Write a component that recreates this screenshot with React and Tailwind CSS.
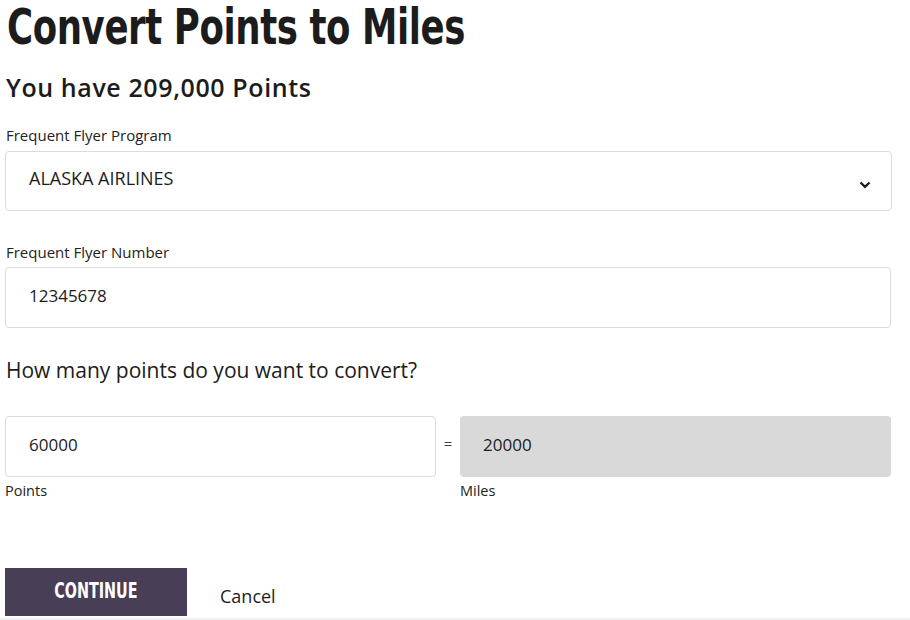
import React from "react";

const body = { fontFamily: "'Open Sans', 'Liberation Sans', sans-serif" };
const cond = { fontFamily: "'DejaVu Sans Condensed', 'DejaVu Sans', sans-serif" };

export default function App() {
  return (
    <div className="w-[910px] h-[620px] bg-white overflow-hidden flex flex-col text-[#222]" style={body}>
      <div className="flex-1 flex flex-col pl-[5px] pr-[18px]">
        <h1 className="h-[56px] -mt-[1px] ml-[2px] whitespace-nowrap">
          <span
            className="inline-block origin-left scale-x-[0.79] text-[50px] leading-[56px] font-bold tracking-[-0.5px] text-[#1c1c1c]"
            style={cond}
          >
            Convert Points to Miles
          </span>
        </h1>
        <h2 className="text-[25px] leading-[30px] font-semibold tracking-[0.6px] mt-[17px] ml-[1px] text-[#1c1c1c]">You have 209,000 Points</h2>

        <label className="text-[15px] leading-[18px] mt-[24px] ml-[1px] text-[#222]">Frequent Flyer Program</label>
        <div className="mt-[7px] h-[60px] border border-[#dcdcdc] rounded-[4px] flex items-center justify-between pl-[23px] pr-[20px] pb-[5px]">
          <span className="text-[18px] text-[#1c1c1c]">ALASKA AIRLINES</span>
          <svg width="12" height="8" viewBox="0 0 12 8" className="mt-[12px]">
            <path d="M1.5 1.5 L6 5.8 L10.5 1.5" fill="none" stroke="#1c1c1c" strokeWidth="2.4" />
          </svg>
        </div>

        <label className="text-[15px] leading-[18px] mt-[32px] ml-[1px] text-[#222]">Frequent Flyer Number</label>
        <div className="mt-[6px] h-[61px] border border-[#dcdcdc] rounded-[4px] flex items-center pl-[23px] pb-[4px] mr-[1px]">
          <span className="text-[17px] text-[#1c1c1c]">12345678</span>
        </div>

        <p className="text-[21px] leading-[26px] mt-[29px] ml-[1px] text-[#1c1c1c]">How many points do you want to convert?</p>

        <div className="mt-[33px] flex items-start mr-[1px]">
          <div className="flex flex-col w-[431px]">
            <div className="h-[61px] border border-[#dcdcdc] rounded-[4px] flex items-center pl-[23px] pb-[3px]">
              <span className="text-[17px] text-[#1c1c1c]">60000</span>
            </div>
            <span className="text-[14.5px] leading-[16px] mt-[6px] text-[#222]">Points</span>
          </div>
          <div className="w-[24px] h-[61px] flex items-center justify-center pb-[6px] text-[15px] text-[#444]">=</div>
          <div className="flex-1 flex flex-col">
            <div className="h-[61px] bg-[#d9d9d9] rounded-[4px] flex items-center pl-[23px] pb-[3px]">
              <span className="text-[17px] text-[#1c1c1c]">20000</span>
            </div>
            <span className="text-[14.5px] leading-[16px] mt-[6px] text-[#222]">Miles</span>
          </div>
        </div>

        <div className="mt-[69px] flex items-center">
          <button className="w-[182px] h-[48px] bg-[#483e56] text-white flex items-center justify-center">
            <span
              className="inline-block scale-x-[0.76] text-[21px] font-bold whitespace-nowrap"
              style={cond}
            >
              CONTINUE
            </span>
          </button>
          <span className="ml-[33px] mt-[8px] text-[18px] text-[#1c1c1c]">Cancel</span>
        </div>
      </div>
      <div className="h-[2px] bg-[#f0f0f0]" />
    </div>
  );
}
